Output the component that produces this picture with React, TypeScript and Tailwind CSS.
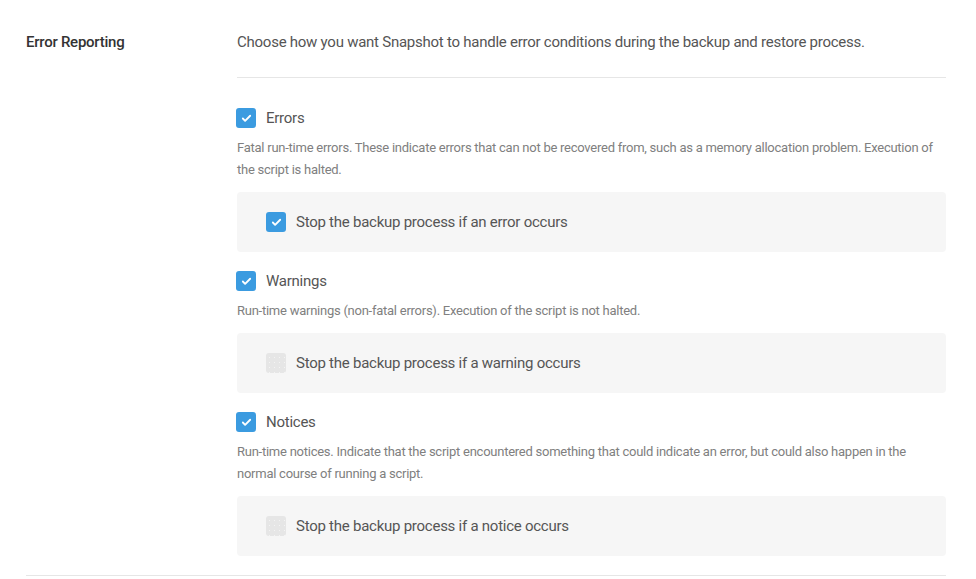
import { Check } from "lucide-react";

interface Level {
  key: string;
  label: string;
  help: string;
  stopLabel: string;
  stop: boolean;
}

const LEVELS: Level[] = [
  {
    key: "errors",
    label: "Errors",
    help: "Fatal run-time errors. These indicate errors that can not be recovered from, such as a memory allocation problem. Execution of the script is halted.",
    stopLabel: "Stop the backup process if an error occurs",
    stop: true,
  },
  {
    key: "warnings",
    label: "Warnings",
    help: "Run-time warnings (non-fatal errors). Execution of the script is not halted.",
    stopLabel: "Stop the backup process if a warning occurs",
    stop: false,
  },
  {
    key: "notices",
    label: "Notices",
    help: "Run-time notices. Indicate that the script encountered something that could indicate an error, but could also happen in the normal course of running a script.",
    stopLabel: "Stop the backup process if a notice occurs",
    stop: false,
  },
];

function Box({ checked, disabled }: { checked: boolean; disabled?: boolean }) {
  if (disabled) {
    return (
      <span
        className="w-5 h-5 rounded-[3px] shrink-0 bg-[#e6e6e6]"
        style={{
          backgroundImage: "radial-gradient(circle, #f4f4f4 0.7px, transparent 1px)",
          backgroundSize: "5px 5px",
          backgroundPosition: "1px 2px",
        }}
      />
    );
  }
  return (
    <span className="w-5 h-5 rounded-[3px] shrink-0 bg-[#3b9be0] flex items-center justify-center">
      {checked && <Check className="w-[11px] h-[11px] text-white" strokeWidth={4} />}
    </span>
  );
}

export default function App() {
  return (
    <div className="bg-white w-[976px] h-[579px] pt-[31px] pl-[26px] pr-[30px] font-['Roboto',sans-serif] tracking-[-0.25px]">
      <div className="flex border-b border-[#e6e6e6] pb-[19px]">
        {/* Label column */}
        <div className="w-[211px] shrink-0 text-[15px] leading-[22px] font-medium text-[#333]">
          Error Reporting
        </div>

        {/* Settings column */}
        <div className="flex-1">
          <p className="text-[15px] leading-[22px] text-[#555] pb-[24px] border-b border-[#e6e6e6]">
            Choose how you want Snapshot to handle error conditions during the backup and restore process.
          </p>

          <div className="pt-[30px] flex flex-col gap-[19px]">
            {LEVELS.map((lv) => (
              <div key={lv.key}>
                <label className="flex items-center gap-[10px] h-5 -ml-px">
                  <Box checked />
                  <span className="text-[15px] text-[#555]">{lv.label}</span>
                </label>
                <p className="mt-[9px] text-[13px] leading-[22px] text-[#808080]">{lv.help}</p>
                <div className="mt-[11px] h-[60px] rounded bg-[#f6f6f6] flex items-center gap-[10px] pl-[29px]">
                  <Box checked={lv.stop} disabled={!lv.stop} />
                  <span className="text-[15px] text-[#555]">{lv.stopLabel}</span>
                </div>
              </div>
            ))}
          </div>
        </div>
      </div>
    </div>
  );
}
